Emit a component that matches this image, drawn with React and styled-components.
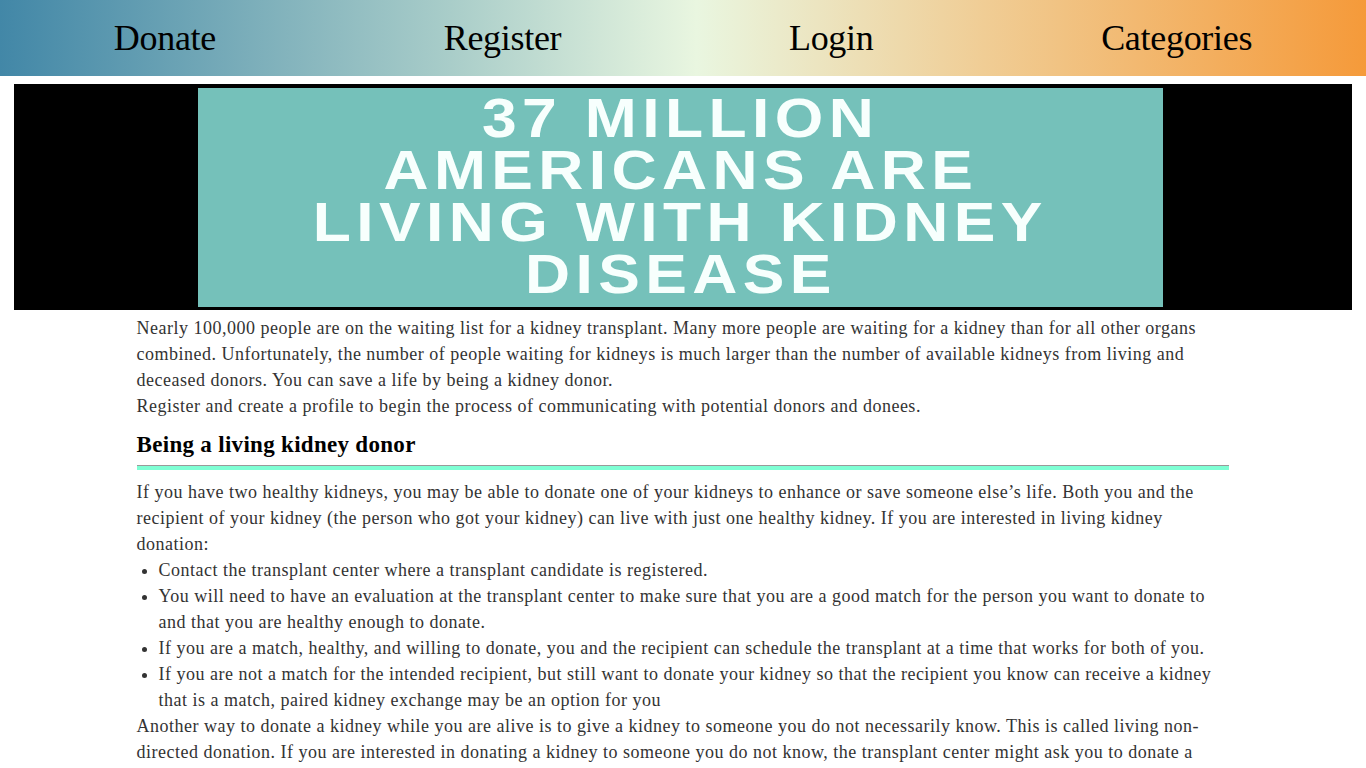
import React from "react";
import styled, { createGlobalStyle } from "styled-components";

const GlobalStyle = createGlobalStyle`
  body {
    margin: 0;
    background: #fff;
    font-family: "Liberation Serif", "Times New Roman", serif;
  }
`;

const navItems = ["Donate", "Register", "Login", "Categories"];

function App() {
  return (
    <>
      <GlobalStyle />
      <Nav>
        {navItems.map((item) => (
          <NavLink key={item} href="#">
            {item}
          </NavLink>
        ))}
      </Nav>
      <Banner>
        <Poster>
          <PosterLine>37 Million</PosterLine>
          <PosterLine>Americans are</PosterLine>
          <PosterLine>Living with kidney</PosterLine>
          <PosterLine>Disease</PosterLine>
        </Poster>
      </Banner>
      <Content>
        <Text>
          Nearly 100,000 people are on the waiting list for a kidney transplant.
          Many more people are waiting for a kidney than for all other organs
          combined. Unfortunately, the number of people waiting for kidneys is
          much larger than the number of available kidneys from living and
          deceased donors. You can save a life by being a kidney donor.
          <br />
          Register and create a profile to begin the process of communicating
          with potential donors and donees.
        </Text>
        <Heading>Being a living kidney donor</Heading>
        <Rule />
        <Text>
          If you have two healthy kidneys, you may be able to donate one of your
          kidneys to enhance or save someone else’s life. Both you and the
          recipient of your kidney (the person who got your kidney) can live
          with just one healthy kidney. If you are interested in living kidney
          donation:
        </Text>
        <List>
          <Item>Contact the transplant center where a transplant candidate is registered.</Item>
          <Item>
            You will need to have an evaluation at the transplant center to make
            sure that you are a good match for the person you want to donate to
            and that you are healthy enough to donate.
          </Item>
          <Item>
            If you are a match, healthy, and willing to donate, you and the
            recipient can schedule the transplant at a time that works for both
            of you.
          </Item>
          <Item>
            If you are not a match for the intended recipient, but still want to
            donate your kidney so that the recipient you know can receive a
            kidney that is a match, paired kidney exchange may be an option for
            you
          </Item>
        </List>
        <Text>
          Another way to donate a kidney while you are alive is to give a kidney
          to someone you do not necessarily know. This is called living
          non-directed donation. If you are interested in donating a kidney to
          someone you do not know, the transplant center might ask you to donate
          a kidney through a paired kidney exchange program.
        </Text>
      </Content>
    </>
  );
}

const Nav = styled.nav`
  height: 76px;
  display: flex;
  justify-content: space-around;
  align-items: center;
  background: linear-gradient(to right, #4287a7 0%, #a9cdc9 33%, #e9f6e0 51%, #f0cd95 72%, #f59a3a 100%);
`;

const NavLink = styled.a`
  font-size: 36px;
  color: #000;
  text-decoration: none;
  letter-spacing: -0.3px;
`;

const Banner = styled.div`
  margin: 8px 14px 0;
  height: 226px;
  background: #000;
  display: flex;
  justify-content: center;
  align-items: center;
`;

const Poster = styled.div`
  width: 965px;
  height: 219px;
  margin-left: -5px;
  background: #75c1ba;
  display: flex;
  flex-direction: column;
  justify-content: center;
  align-items: center;
  padding-bottom: 2px;
  box-sizing: border-box;
`;

const PosterLine = styled.div`
  font-family: "Liberation Sans", Arial, sans-serif;
  font-weight: 700;
  font-size: 52px;
  line-height: 52px;
  height: 52px;
  letter-spacing: 4.5px;
  color: #f7fffd;
  text-transform: uppercase;
  transform: scale(1.2, 1.08);
`;

const Content = styled.main`
  width: 80%;
  margin: 5px auto 0;
  color: #333;
`;

const Text = styled.p`
  margin: 0;
  font-size: 18px;
  line-height: 26px;
  letter-spacing: 0.5px;
`;

const Heading = styled.h3`
  margin: 12px 0 0;
  font-size: 23px;
  line-height: 28px;
  font-weight: 700;
  letter-spacing: 0.3px;
  color: #000;
`;

const Rule = styled.hr`
  margin: 6px 0 9px;
  height: 4px;
  border: none;
  border-top: 1px solid #9a9a9a;
  background: #7fffd4;
`;

const List = styled.ul`
  margin: 0;
  padding-left: 22px;
`;

const Item = styled.li`
  font-size: 18px;
  line-height: 26px;
  letter-spacing: 0.5px;
`;

export default App;
